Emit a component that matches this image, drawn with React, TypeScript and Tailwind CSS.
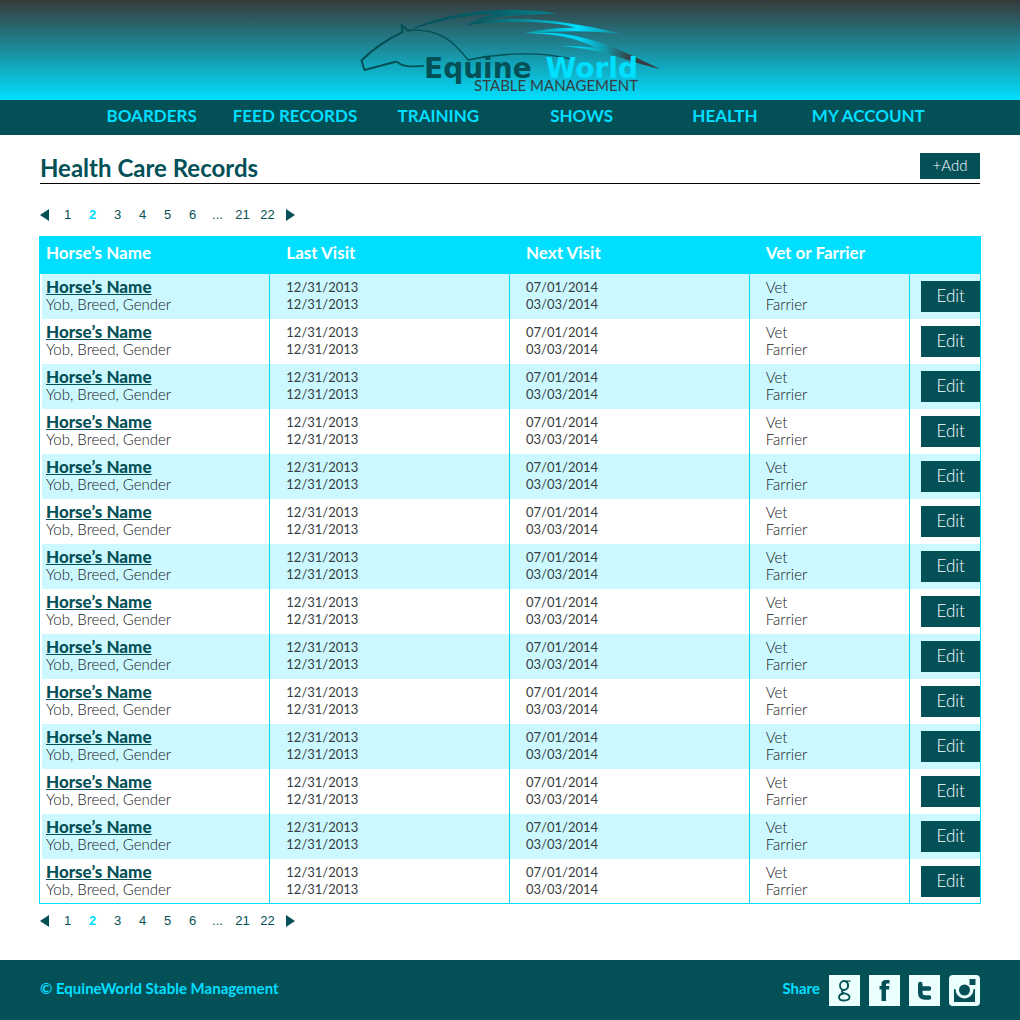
import React from "react";

const navItems = ["BOARDERS", "FEED RECORDS", "TRAINING", "SHOWS", "HEALTH", "MY ACCOUNT"];
const pages = ["1", "2", "3", "4", "5", "6", "...", "21", "22"];
const rows = Array.from({ length: 14 }, (_, i) => i);

function Logo() {
  return (
    <svg viewBox="0 0 320 100" className="h-[100px] w-[320px]" role="img" aria-label="EquineWorld Stable Management">
      <defs>
        <linearGradient id="mane" x1="0" x2="1">
          <stop offset="0" stopColor="#045057" />
          <stop offset="0.35" stopColor="#0a8896" />
          <stop offset="0.7" stopColor="#00dfff" />
          <stop offset="1" stopColor="#177f8d" />
        </linearGradient>
        <linearGradient id="tip" x1="0" x2="1">
          <stop offset="0" stopColor="#00cfec" />
          <stop offset="0.4" stopColor="#00d6f5" />
          <stop offset="0.6" stopColor="#1594a5" />
          <stop offset="0.78" stopColor="#373d41" />
        </linearGradient>
        <linearGradient id="crest" x1="0" x2="1">
          <stop offset="0" stopColor="#045057" />
          <stop offset="0.6" stopColor="#07606a" />
          <stop offset="1" stopColor="#0a8390" />
        </linearGradient>
      </defs>
      <g fill="none" stroke="#045057" strokeLinejoin="round">
        <path strokeWidth="2" d="M60 30.500 L57.500 30.500 L51.500 24.500 L52.500 32 C38 39 24 48 11.500 60.500 L14.500 70 L46.500 61.500" />
        <path strokeWidth="1.700" d="M46.500 61.500 C54 68 64 66.500 74 66" />
        <path strokeWidth="1.300" d="M58 30.500 C88 28 103 40 118 60 C150 53 190 51 221 59" />
      </g>
      <path d="M59 30.500 C85 17 140 3 207 13.500 C185 15 165 15 150 17 C138 19 128 22 116 25.500 C126 19 136 16 146 14 C115 14 85 22 59 30.500Z" fill="url(#crest)" />
      <path d="M117 25 C150 15 205 17 274 34.500 C240 30 210 31 175 33 C195 28.500 210 28 225 27.500 C200 20 150 21 117 25Z" fill="url(#mane)" />
      <path d="M175 33 C225 30 255 42 310 69 C275 61 255 49 212 46.500 C225 46 238 47 246 48 C225 37 205 34 175 33Z" fill="url(#tip)" />
      <g fontFamily="DejaVu Sans, sans-serif" fontWeight="700" fontSize="28">
        <text x="74" y="78" fill="#045057">Equine</text>
        <text x="288" y="78" textAnchor="end" fill="#00dfff">World</text>
      </g>
      <text x="288" y="91" textAnchor="end" fontFamily="Lato, sans-serif" fontSize="15" fill="#373d41">STABLE MANAGEMENT</text>
    </svg>
  );
}

function Pagination() {
  return (
    <nav aria-label="Pages" className="flex h-5 items-center font-['Liberation_Sans',sans-serif] text-[13px] text-[#045057]">
      <button aria-label="Previous page" className="mr-1.5">
        <svg viewBox="0 0 9 12" className="h-3 w-[9px]"><path d="M9 0v12L0 6z" fill="currentColor" /></svg>
      </button>
      {pages.map((p) => (
        <a key={p} href="#" className={p === "2" ? "w-[25px] text-center font-bold text-[#00dfff]" : "w-[25px] text-center"}>{p}</a>
      ))}
      <button aria-label="Next page" className="ml-1.5">
        <svg viewBox="0 0 9 12" className="h-3 w-[9px]"><path d="M0 0v12l9-6z" fill="currentColor" /></svg>
      </button>
    </nav>
  );
}

function ShareLinks() {
  return (
    <>
      <a href="#" aria-label="Google">
        <svg viewBox="0 0 31 31" className="size-[31px]">
          <rect width="31" height="31" fill="#ecffff" />
          <g fill="none" stroke="#045057">
            <ellipse cx="15" cy="10.500" rx="4" ry="4.500" strokeWidth="1.800" />
            <path strokeWidth="1.300" d="M16 6.200 H21.500 M17.500 6.500 C19.500 8 20 10 18.500 13" />
            <path strokeWidth="1.800" d="M15 15 C11.500 16 13 17.800 15.500 18.300 C19 19 20.500 20 20.500 22 C20.500 24.500 17.500 25.500 15 25.500 C12 25.500 10 24.300 10 22.200 C10 20 12.500 18.800 14.500 18.500" />
          </g>
        </svg>
      </a>
      <a href="#" aria-label="Facebook">
        <svg viewBox="0 0 31 31" className="size-[31px]">
          <rect width="31" height="31" fill="#ecffff" />
          <path d="M12.500 26 V14.500 H10.500 V11 H12.500 V9.500 C12.500 6 14.500 5 17 5 H20.500 V8.500 H18.500 C17.200 8.500 17 9 17 10 V11 H20.500 L20 14.500 H17 V26Z" fill="#045057" />
        </svg>
      </a>
      <a href="#" aria-label="Twitter">
        <svg viewBox="0 0 31 31" className="size-[31px]">
          <rect width="31" height="31" fill="#ecffff" />
          <path d="M11.300 9 V18 Q11.300 22.500 16 22.500 H20 M11.300 13.500 H20" fill="none" stroke="#045057" strokeWidth="4.500" strokeLinecap="round" />
        </svg>
      </a>
      <a href="#" aria-label="Instagram">
        <svg viewBox="0 0 31 31" className="size-[31px]">
          <rect width="31" height="31" rx="4" fill="#ecffff" />
          <path d="M5 14 H26 V27 H5Z" fill="#045057" />
          <circle cx="15.500" cy="14.500" r="9" fill="#ecffff" />
          <circle cx="15.500" cy="15" r="5.500" fill="#045057" />
          <rect x="20.500" y="4" width="6" height="6" fill="#045057" />
        </svg>
      </a>
    </>
  );
}

export default function App() {
  return (
    <div className="min-h-screen bg-white font-[Lato,sans-serif] text-[#373d41]">
      <header>
        <div className="flex h-[100px] justify-center bg-linear-to-b/srgb from-[#373a3b] to-[#00dfff]"><Logo /></div>
        <nav className="h-[35px] bg-[#045057] px-20">
          <ul className="grid grid-cols-6 pt-1 text-center text-[17px] leading-6 font-bold text-[#00dfff]">
            {navItems.map((n) => <li key={n}><a href="#">{n}</a></li>)}
          </ul>
        </nav>
      </header>
      <main className="px-10 pb-[29px]">
        <div className="flex h-[49px] items-end justify-between border-b border-black">
          <h1 className="text-2xl leading-[30px] font-bold text-[#045057]">Health Care Records</h1>
          <button className="mb-1 h-[26px] w-[60px] bg-[#045057] pb-px text-[15px] font-light text-white">+Add</button>
        </div>
        <div className="pt-[21px] pb-[11px]"><Pagination /></div>
        <div className="-mx-px">
          <table className="w-full table-fixed border-separate border-spacing-0 border border-[#00dfff] text-left text-[15px] leading-[17px] font-light text-[#15191b]">
            <colgroup>
              <col className="w-[24.5%]" /><col className="w-[25.5%]" /><col className="w-[25.5%]" /><col className="w-[17.1%]" /><col />
            </colgroup>
            <thead>
              <tr className="h-[37px] bg-[#00dfff] text-[17px] text-white">
                <th className="pb-1.5 pl-1.5">Horse’s Name</th>
                <th className="pb-1.5 pl-4">Last Visit</th>
                <th className="pb-1.5 pl-4">Next Visit</th>
                <th className="pb-1.5 pl-4">Vet or Farrier</th>
                <th aria-label="Actions"></th>
              </tr>
            </thead>
            <tbody>
              {rows.map((r) => (
                <tr key={r} className="h-[45px] odd:bg-[#ccf8ff] last:h-11">
                  <td className="border-r border-l-2 border-r-[#00dfff] border-l-white pt-1 pb-[5px] pl-1 align-top">
                    <a href="#" className="block text-[17px] leading-[18px] font-black text-[#045057] underline">Horse’s Name</a>
                    Yob, Breed, Gender
                  </td>
                  <td className="border-r border-[#00dfff] pt-[5px] pb-[5px] pl-4 align-top text-[13px] leading-[17px] font-normal text-[#373d41]">12/31/2013<br />12/31/2013</td>
                  <td className="border-r border-[#00dfff] pt-[5px] pb-[5px] pl-4 align-top text-[13px] leading-[17px] font-normal text-[#373d41]">07/01/2014<br />03/03/2014</td>
                  <td className="border-r border-[#00dfff] pt-[5px] pb-[5px] pl-4 align-top">Vet<br />Farrier</td>
                  <td className="pt-[7px] pl-[11px] align-top">
                    <button className="block h-[31px] w-full bg-[#045057] pb-0.5 text-[17px] font-light text-white">Edit</button>
                  </td>
                </tr>
              ))}
            </tbody>
          </table>
        </div>
        <div className="pt-[7px]"><Pagination /></div>
      </main>
      <footer className="flex h-[60px] items-center justify-between bg-[#045057] px-10 text-[15px] font-bold text-[#00dfff]">
        <p className="pb-1">© EquineWorld Stable Management</p>
        <div className="flex items-center gap-[9px]"><span className="pb-1">Share</span><ShareLinks /></div>
      </footer>
    </div>
  );
}
